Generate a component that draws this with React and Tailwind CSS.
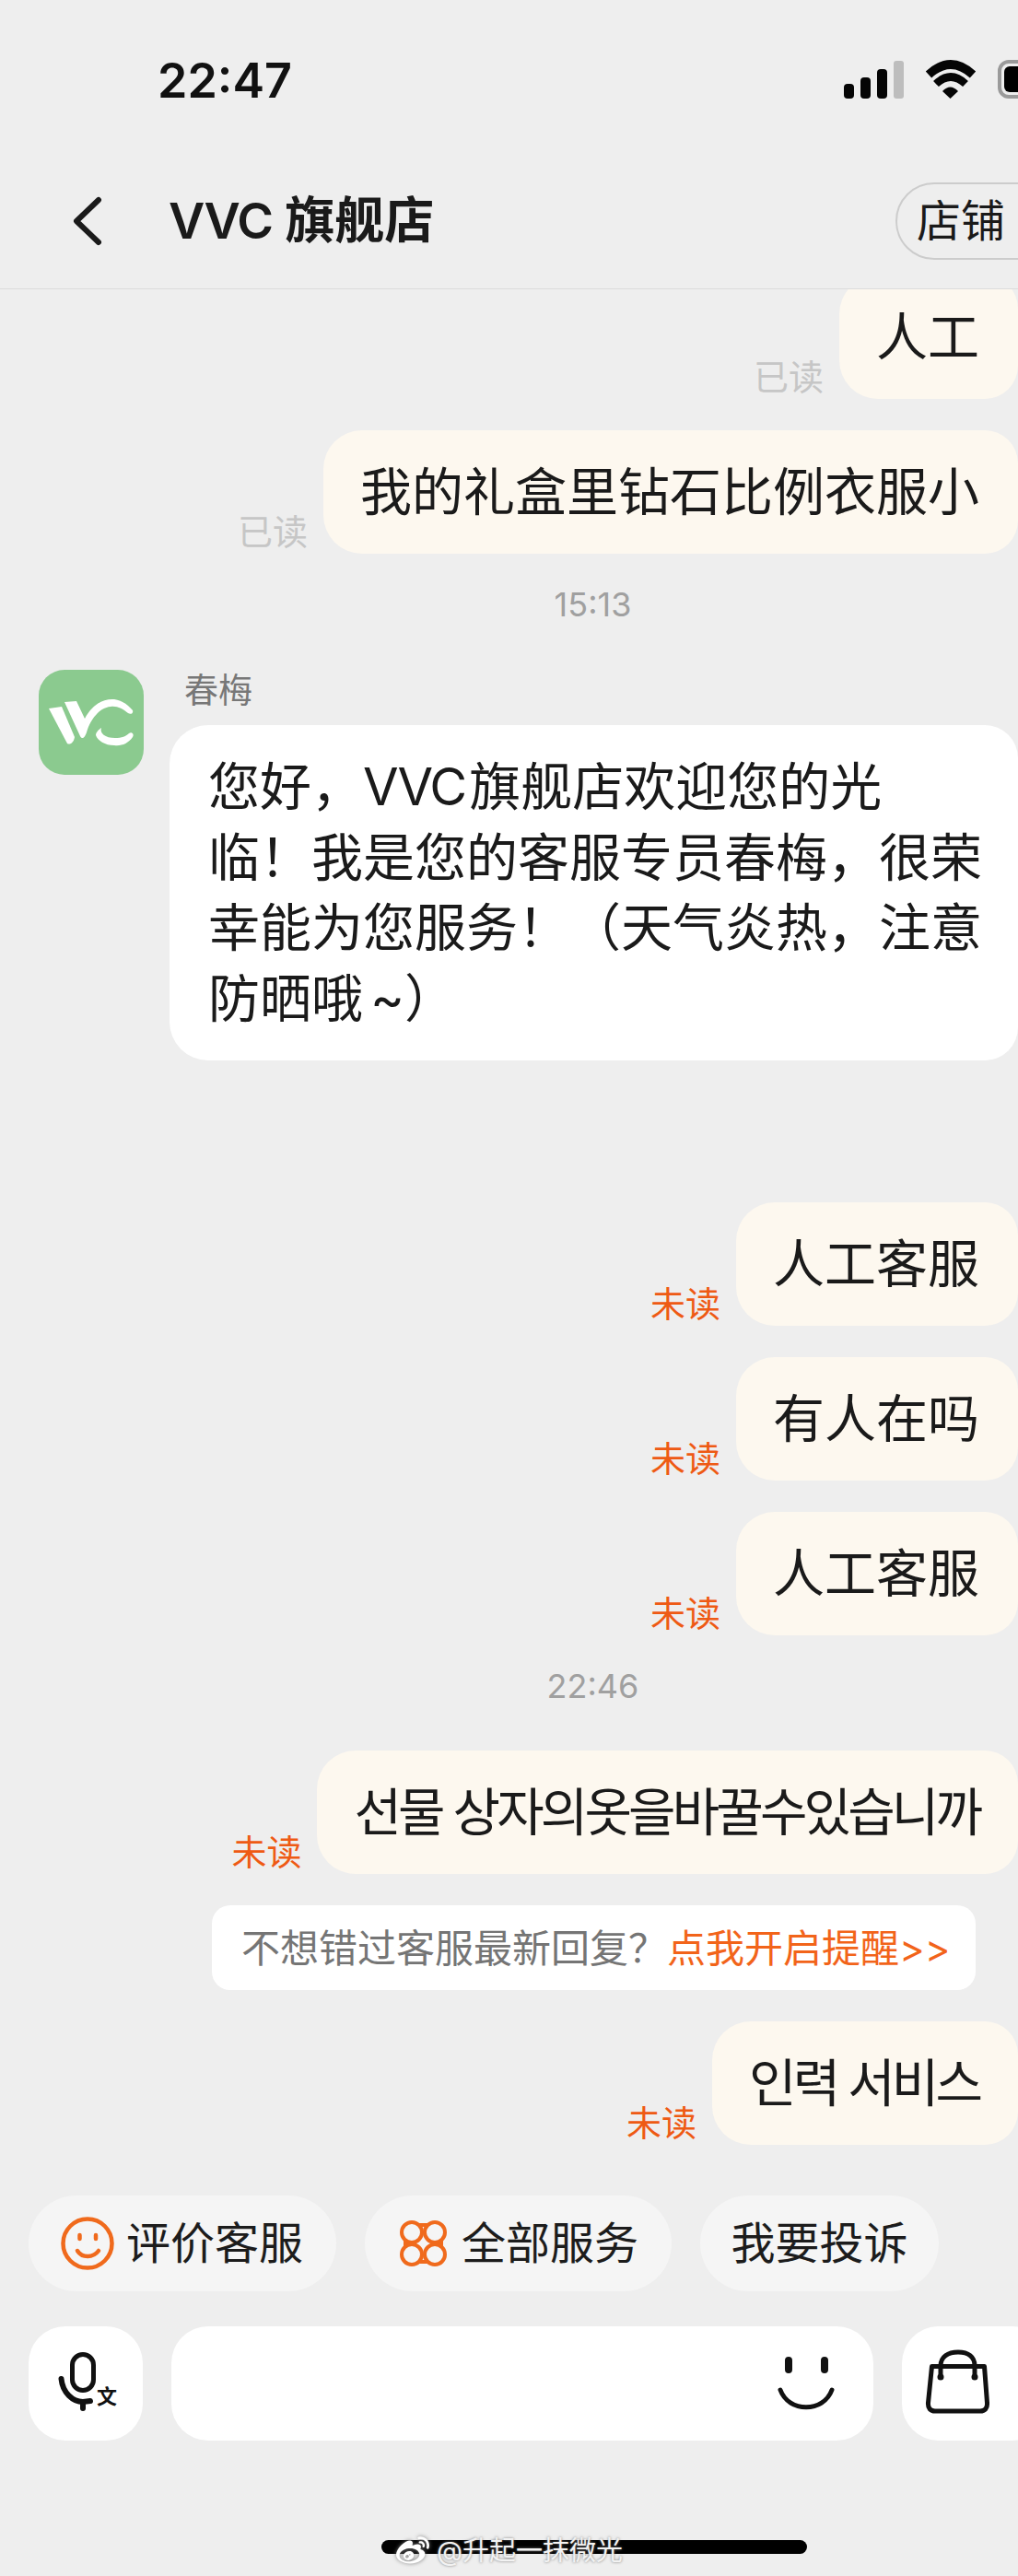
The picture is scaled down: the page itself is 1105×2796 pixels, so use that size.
import React from 'react';
import { FaWeibo } from 'react-icons/fa';

function Status({ read }) {
  return (
    <span className={`mr-[17px] mb-[5px] text-[38px] leading-[38px] ${read ? 'text-[#c6c6c6]' : 'text-[#ee5a14]'}`}>
      {read ? '已读' : '未读'}
    </span>
  );
}

function Mine({ text, read, korean, className = '' }) {
  return (
    <div className={`flex justify-end items-end ${className}`}>
      <Status read={read} />
      <div className={`h-[134px] pl-[40px] pr-[42px] flex items-center rounded-l-[42px] rounded-r-[36px] bg-[#fdf8ef] text-[56px] leading-[77px] text-[#1a1a1a] whitespace-nowrap ${korean ? 'tracking-[-3.9px]' : ''}`}>
        {text}
      </div>
    </div>
  );
}

function TimeLabel({ children, className = '' }) {
  return <div className={`pl-[182px] text-center text-[36px] leading-[44px] text-[#a0a0a0] ${className}`}>{children}</div>;
}

function Chip({ icon, children, className = '' }) {
  return (
    <div className={`h-[104px] flex items-center rounded-[52px] bg-[#f5f5f5] text-[48px] text-[#1c1c1c] whitespace-nowrap ${className}`}>
      {icon}
      {children}
    </div>
  );
}

export default function App() {
  return (
    <div className="relative w-[1105px] h-[2796px] overflow-hidden bg-[#eeeeee] font-['Inter','Noto_Sans_CJK_SC','Noto_Sans_CJK_KR',sans-serif]">
      {/* status bar */}
      <div className="h-[177px] flex items-start pt-[57px]">
        <span className="ml-[171px] text-[52px] leading-[62px] font-semibold text-[#111]">22:47</span>
        <div className="ml-auto -mr-[38px] flex items-start gap-[22px] pt-[8px]">
          <svg width="65" height="42" viewBox="0 0 65 42">
            <rect x="0" y="26" width="11" height="16" rx="4" fill="#050505" />
            <rect x="18" y="19" width="11" height="23" rx="4" fill="#050505" />
            <rect x="36" y="10" width="11" height="32" rx="4" fill="#050505" />
            <rect x="54" y="1" width="11" height="41" rx="3" fill="#bdbdbd" />
          </svg>
          <svg width="58" height="42" viewBox="0 0 58 42">
            <path d="M5 16Q29 -6 53 16" fill="none" stroke="#050505" strokeWidth="9.5" />
            <path d="M13 26Q29 11 45 26" fill="none" stroke="#050505" strokeWidth="8.5" />
            <path d="M20 34Q28.5 25 37 34L28.5 42Z" fill="#050505" />
          </svg>
          <div className="w-[60px] h-[42px] rounded-[12px] border-[4px] border-[#9a9a9a] p-[3px]">
            <div className="w-full h-full rounded-[6px] bg-black" />
          </div>
        </div>
      </div>

      {/* header */}
      <div className="relative z-10 h-[137px] pb-[11px] flex items-center border-b border-[#dcdcdc] bg-[#eeeeee]">
        <svg className="ml-[76px]" width="38" height="54" viewBox="0 0 38 54">
          <path d="M31 4L7 27L31 50" fill="none" stroke="#1a1a1a" strokeWidth="6" strokeLinecap="round" strokeLinejoin="round" />
        </svg>
        <span className="ml-[69px] text-[54px] font-semibold text-[#1a1a1a] whitespace-nowrap"><span className="tracking-[-1.5px]">VVC</span> 旗舰店</span>
        <div className="ml-auto -mr-[40px] w-[173px] h-[84px] pl-[21px] flex items-center rounded-[42px] border-[2px] border-[#cccccc] text-[48px] text-[#1a1a1a] whitespace-nowrap">
          店铺
        </div>
      </div>

      {/* messages */}
      <div className="h-[2069px] overflow-hidden">
        <div className="-mt-[15px]">
          <Mine text="人工" read />
          <Mine text="我的礼盒里钻石比例衣服小" read className="mt-[34px]" />
          <TimeLabel className="mt-[33px]">15:13</TimeLabel>

          <div className="flex mt-[49px] pl-[42px]">
            <svg className="shrink-0" width="114" height="114" viewBox="0 0 114 114">
              <rect width="114" height="114" rx="28" fill="#8bca8f" />
              <path d="M11 42L25 40L39 73C38 79 34 82 31 80Z" fill="#fff" />
              <path d="M28 35L41 34L50 53C58 38 70 31 82 32C90 33 97 38 102 44C103 47 100 49 97 47C91 42 85 39 78 40C66 41 56 54 52 68C50 74 47 76 45 72Z" fill="#fff" />
              <path d="M68 63C66 69 72 74 83 74C90 74 95 72 98 69C101 67 104 70 102 73C97 80 90 83 82 82C72 82 64 77 62 71C62 68 65 65 68 63Z" fill="#fff" />
            </svg>
            <div className="ml-[28px] flex-1">
              <div className="mt-[3px] ml-[16px] text-[37px] leading-[40px] text-[#777777]">春梅</div>
              <div className="mt-[17px] h-[364px] pl-[42px] pt-[29px] rounded-l-[42px] rounded-r-[36px] bg-white text-[56px] leading-[76.5px] text-[#1a1a1a] whitespace-nowrap">
                您好，<span className="tracking-[-2px]">VVC</span><span className="ml-[4px]">旗舰店欢迎您的光</span>
                <br />
                临！我是您的客服专员春梅，很荣
                <br />
                幸能为您服务！（天气炎热，注意
                <br />
                防晒哦<span className="ml-[8px]">~）</span>
              </div>
            </div>
          </div>

          <Mine text="人工客服" className="mt-[154px]" />
          <Mine text="有人在吗" className="mt-[34px]" />
          <Mine text="人工客服" className="mt-[34px]" />
          <TimeLabel className="mt-[33px]">22:46</TimeLabel>
          <Mine text="선물 상자의옷을바꿀수있습니까" korean className="mt-[48px]" />

          <div className="mt-[34px] ml-[230px] w-[829px] h-[92px] flex items-center pl-[32px] rounded-[20px] bg-white text-[42px] text-[#757575] whitespace-nowrap">
            不想错过客服最新回复？<span className="text-[#f2641a]">点我开启提醒&gt;&gt;</span>
          </div>

          <Mine text="인력 서비스" korean className="mt-[34px]" />
        </div>
      </div>

      {/* quick actions */}
      <div className="ml-[31px] flex gap-[31px]">
        <Chip className="w-[334px] pl-[35px] gap-[13px]" icon={
          <svg width="58" height="58" viewBox="0 0 58 58">
            <circle cx="29" cy="29" r="26.5" fill="none" stroke="#f06a1c" strokeWidth="4.5" />
            <path d="M20.5 20V24M38 20V24" stroke="#f06a1c" strokeWidth="4.5" strokeLinecap="round" />
            <path d="M18 37C23 45 35 45 41 37" fill="none" stroke="#f06a1c" strokeWidth="4.5" strokeLinecap="round" />
          </svg>
        }>评价客服</Chip>
        <Chip className="w-[333px] pl-[38px] gap-[16px]" icon={
          <svg width="51" height="50" viewBox="0 0 51 50">
            <circle cx="13" cy="13" r="11" fill="none" stroke="#f06a1c" strokeWidth="4" />
            <circle cx="38" cy="13" r="11" fill="none" stroke="#f06a1c" strokeWidth="4" />
            <circle cx="13" cy="37" r="11" fill="none" stroke="#f06a1c" strokeWidth="4" />
            <circle cx="38" cy="37" r="11" fill="none" stroke="#f06a1c" strokeWidth="4" />
            <path d="M20 5H31M20 45H31M6 21V29M45 21V29" stroke="#f06a1c" strokeWidth="4" />
          </svg>
        }>全部服务</Chip>
        <Chip className="w-[259px] justify-center">我要投诉</Chip>
      </div>

      {/* input row */}
      <div className="mt-[38px] ml-[31px] flex gap-[31px]">
        <div className="relative shrink-0 w-[124px] h-[124px] rounded-[40px] bg-white">
          <svg className="absolute left-[32px] top-[26px]" width="42" height="66" viewBox="0 0 42 66">
            <rect x="15.5" y="4.5" width="23" height="39" rx="11.5" fill="none" stroke="#111" strokeWidth="5" />
            <path d="M3.5 31C5 46 16 56 27 56L35 55" fill="none" stroke="#111" strokeWidth="6" strokeLinecap="round" />
            <path d="M27 56V63" fill="none" stroke="#111" strokeWidth="6" strokeLinecap="round" />
          </svg>
          <span className="absolute left-[74px] top-[64px] text-[22px] leading-[24px] font-bold text-[#111]">文</span>
        </div>
        <div className="relative shrink-0 w-[762px] h-[124px] rounded-[40px] bg-white">
          <svg className="absolute right-[38px] top-[25px]" width="70" height="70" viewBox="0 0 70 70">
            <path d="M16 12V22M55 12V22" stroke="#111" strokeWidth="8" strokeLinecap="round" />
            <path d="M7 44C16 69 54 69 63 44" fill="none" stroke="#111" strokeWidth="5" strokeLinecap="round" />
          </svg>
        </div>
        <div className="relative shrink-0 w-[160px] h-[124px] rounded-[40px] bg-white">
          <svg className="absolute left-[25px] top-[25px]" width="72" height="72" viewBox="0 0 72 72">
            <path d="M7.5 18.5H64.5L67.5 58C68 64 65 67 60 67H11C6 67 3 64 3.5 58Z" fill="none" stroke="#111" strokeWidth="5" strokeLinejoin="round" />
            <path d="M17 29V18C17 8 25 3 36 3C47 3 54 8 54 18V29" fill="none" stroke="#111" strokeWidth="5" />
            <circle cx="17" cy="30" r="3.5" fill="#111" />
            <circle cx="54" cy="30" r="3.5" fill="#111" />
          </svg>
        </div>
      </div>

      {/* home bar and watermark */}
      <div className="absolute left-[414px] top-[2757px] w-[462px] h-[15px] rounded-full bg-black" />
      <div className="absolute left-[430px] top-[2750px] flex items-center gap-[8px] text-white [text-shadow:0_0_3px_#777]">
        <FaWeibo className="text-[36px] drop-shadow-[0_0_2px_#777]" />
        <span className="text-[29px] leading-[38px] text-[#f2f2f2] whitespace-nowrap">@升起一抹微光</span>
      </div>
    </div>
  );
}
